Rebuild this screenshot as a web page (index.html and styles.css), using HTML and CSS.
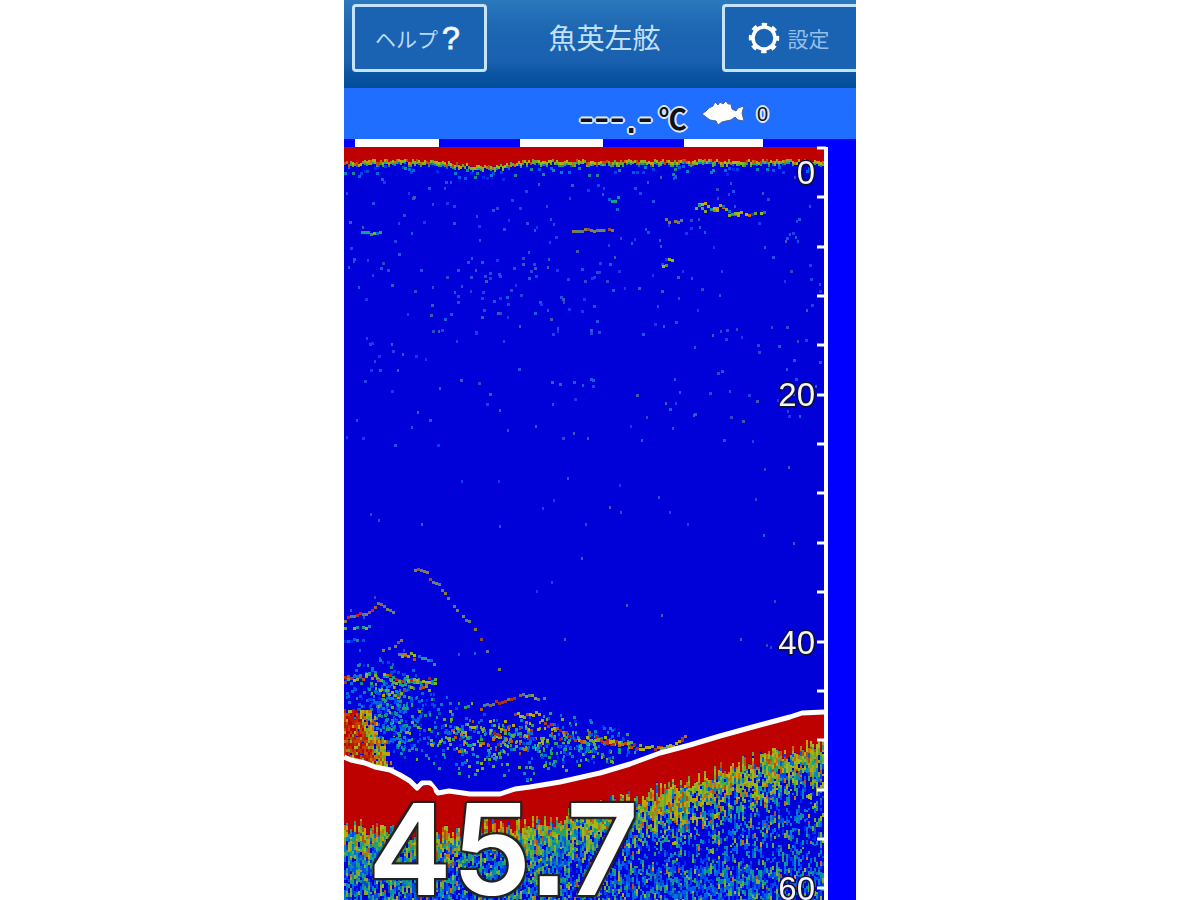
FILE: index.html
```
<!DOCTYPE html>
<html lang="ja">
<head>
<meta charset="utf-8">
<meta name="viewport" content="width=device-width, initial-scale=1">
<title>魚英左舷</title>
<link rel="stylesheet" href="styles.css">
</head>
<body>
<main class="app">
  <header class="topbar">
    <button class="nav-button" type="button">ヘルプ<span class="mark">?</span></button>
    <h1 class="title">魚英左舷</h1>
    <button class="nav-button nav-button-end" type="button">
      <svg class="gear" viewBox="-16 -16 32 32" aria-hidden="true">
        <circle r="11" fill="none" stroke="#fff" stroke-width="3.5"/>
        <circle r="13.2" fill="none" stroke="#fff" stroke-width="4" stroke-dasharray="5.2 5.167" stroke-dashoffset="2.6"/>
      </svg>
      <span class="label">設定</span>
    </button>
  </header>
  <section class="status">
    <span class="temp">---.-</span>
    <span class="unit">℃</span>
    <svg class="fish" viewBox="0 0 44 28" aria-hidden="true">
      <path d="M1 14 L5 11 L8 8 L12 6 L14 2 L17 5 L19 2 L22 4 L25 1 L27 4 L30 4 L31 9 L35 11 L37 8 L43 6 L41 13 L43 21 L37 20 L34 17 L30 20 L25 21 L21 22 L17 25 L15 21 L9 20 L5 17Z" fill="#fff" stroke="#46639c" stroke-width="1"/>
    </svg>
    <span class="count">0</span>
  </section>
  <section class="echo">
    <canvas class="echo-canvas" width="512" height="761"></canvas>
    <svg class="echo-scale" viewBox="0 0 512 761">
      <g fill="#fff"><path d="M11 0h84v8h-84zM176 0h83v8h-83zM340 0h79v8h-79z"/></g>
      <path d="M0 618L7 621L21 624L31 628L46 631L56 636L66 642L73 649L78 644L86 644L94 654L105 652L126 655L156 655L171 650L186 648L216 643L256 634L286 625L316 614L346 606L376 597L416 586L446 578L458 574L480 573" fill="none" stroke="#fff" stroke-width="5" stroke-linejoin="round"/>
      <circle cx="83" cy="653" r="7" fill="#bd0000"/>
      <path id="ticks" fill="none" stroke="#fff" stroke-width="3"/>
      <path d="M482 8V761" stroke="#fff" stroke-width="4"/>
      <g class="depth" text-anchor="end">
        <text x="471" y="45">0</text>
        <text x="471" y="267">20</text>
        <text x="471" y="515">40</text>
        <text x="471" y="761">60</text>
      </g>
    </svg>
    <output class="reading">45<span class="point">.</span>7</output>
  </section>
</main>
<script src="echo.js"></script>
</body>
</html>
```
FILE: styles.css
```
* { box-sizing: border-box; }
body {
  margin: 0;
  background: #fff;
  font-family: "Liberation Sans", "Noto Sans CJK JP", sans-serif;
}
.app {
  width: 100%;
  max-width: 512px;
  margin: 0 auto;
  overflow: hidden;
}
.topbar {
  display: grid;
  grid-template-columns: 135px 1fr 134px;
  height: 88px;
  padding: 4px 0 16px 8px;
  background: linear-gradient(#2b78bc 0, #1c66b2 35%, #1a60b0 70%, #0a54a2 85%, #044d99 100%);
}
.nav-button {
  display: flex;
  align-items: center;
  justify-content: center;
  gap: 4px;
  padding: 0 4px 0 0;
  border: 3px solid #c5e4fc;
  border-radius: 4px;
  background: #1a62b2;
  color: #b9daf8;
  font-family: inherit;
  font-size: 21px;
}
.mark {
  color: #fff;
  font-size: 32px;
  font-weight: 400;
  -webkit-text-stroke: 1px #e8f4ff;
}
.nav-button-end {
  gap: 8px;
  border-right: 0;
  border-radius: 4px 0 0 4px;
}
.gear { width: 32px; height: 32px; }
.label { color: #94bfe8; }
.title {
  align-self: center;
  margin: 0;
  padding-top: 4px;
  text-align: center;
  color: #c3e0fa;
  font-size: 28px;
  font-weight: 400;
  line-height: 40px;
}
.status {
  display: flex;
  align-items: center;
  justify-content: flex-end;
  height: 51px;
  padding-right: 88px;
  background: #206eff;
  color: #111;
  line-height: 32px;
}
.temp, .unit, .count {
  text-shadow: 1px 1px 0 #dce8ff, -1px 1px 0 #dce8ff, 1px -1px 0 #dce8ff, -1px -1px 0 #dce8ff, 2px 0 0 #dce8ff, -2px 0 0 #dce8ff, 0 2px 0 #dce8ff, 0 -2px 0 #dce8ff;
}
.temp {
  padding-top: 6px;
  font-size: 46px;
}
.unit {
  margin-left: 6px;
  padding-top: 8px;
  font-family: "Noto Sans CJK JP", sans-serif;
  font-size: 28px;
  font-weight: 700;
}
.fish { width: 44px; height: 28px; margin-left: 14px; }
.count { margin-left: 12px; font-size: 20px; }
.echo {
  position: relative;
  aspect-ratio: 512 / 761;
  overflow: hidden;
  background: #00f;
}
.echo-canvas, .echo-scale {
  position: absolute;
  inset: 0;
  width: 100%;
  height: 100%;
}
.depth {
  fill: #f4f4ff;
  stroke: #101030;
  stroke-width: 3px;
  stroke-linejoin: round;
  paint-order: stroke;
  font-size: 33px;
}
.reading {
  position: absolute;
  left: 24px;
  bottom: 0;
  color: #fff;
  font-family: Inter, "Liberation Sans", sans-serif;
  font-size: 126px;
  font-weight: 600;
  line-height: 96px;
  text-shadow: 2px 2px 1px #222, -2px -2px 1px #222, 2px -2px 1px #222, -2px 2px 1px #222;
}
.point {
  font-family: "Liberation Sans", sans-serif;
  font-weight: 700;
}
```
FILE: echo.js
```
const ctx = document.querySelector('.echo-canvas').getContext('2d');
let seed = 90210;
const rnd = () => {
  seed = (seed + 0x6D2B79F5) | 0;
  let t = Math.imul(seed ^ (seed >>> 15), 1 | seed);
  t = (t + Math.imul(t ^ (t >>> 7), 61 | t)) ^ t;
  return ((t ^ (t >>> 14)) >>> 0) / 4294967296;
};
const pick = list => list[Math.floor(rnd() * list.length)];
const RED = '#bd0000', WATER = '#0000d8', WIDTH = 480;
const HOT = ['#c8a000', '#c87010', '#9cb810', '#88b020', '#68a830', '#b85010', '#a8b818'];
const MID = ['#28a060', '#60b030', '#0090b8', '#10a090', '#88a830', '#0068e0', '#20a080'];
const COLD = ['#0058f0', '#0040f0', '#0080c8', '#0068e0', '#188898', '#0028f0', '#0050d0'];
const FAINT = ['#1838f0', '#2050e8', '#1060e0', '#3048c8', '#2040e8', '#4058b0'];

const bed = [[0, 618], [21, 624], [46, 631], [73, 648], [94, 654], [126, 655], [156, 655], [186, 648], [256, 634], [316, 614], [376, 597], [446, 578], [480, 573]];
const under = [[0, 686], [56, 692], [90, 696], [130, 688], [176, 686], [216, 678], [256, 668], [296, 657], [336, 645], [376, 632], [416, 619], [456, 608], [480, 604]];
const at = (line, x) => {
  for (let i = 1; i < line.length; i++) {
    const [x0, y0] = line[i - 1], [x1, y1] = line[i];
    if (x <= x1) return y0 + (y1 - y0) * (x - x0) / (x1 - x0);
  }
  return line[line.length - 1][1];
};
const dot = (x, y, colour, w = 2, h = 3) => {
  ctx.fillStyle = colour;
  ctx.fillRect(Math.round(x), Math.round(y), w, h);
};

ctx.fillStyle = WATER;
ctx.fillRect(0, 8, WIDTH, 753);

/* Surface clutter */
for (let x = 0; x < WIDTH; x += 2) {
  const edge = 20 + (x > 90 && x < 185 ? 5 * Math.sin((x - 90) / 95 * Math.PI) : 0) + (x < 20 ? 2 : 0);
  const h = edge + Math.floor(rnd() * 4);
  dot(x, 8, RED, 2, h - 8);
  dot(x, h, pick(HOT), 2, 3);
  if (rnd() < .75) dot(x, h + 3, pick(MID), 2, 2);
  if (rnd() < .25) dot(x, h + 5 + rnd() * 7, pick(COLD), 3, 3);
}

/* Ambient speckle, thinning with depth */
for (let i = 0; i < 270; i++) {
  const y = 36 + Math.pow(rnd(), 1.3) * 270;
  dot(rnd() * 477, y, pick(FAINT), 2 + Math.floor(rnd() * 2), 3);
}
for (let i = 0; i < 45; i++) dot(rnd() * 470, 270 + rnd() * 250, pick(FAINT));
for (let i = 0; i < 50; i++) dot(85 + rnd() * 180, 120 + rnd() * 75, pick(FAINT), 3, 3);

/* Echo traces follow a polyline with a spread and a density */
const trace = (points, spread, density, colours) => {
  for (let x = points[0][0]; x < points[points.length - 1][0]; x += 3) {
    const n = Math.floor(density) + (rnd() < density % 1 ? 1 : 0);
    for (let k = 0; k < n; k++) dot(x, at(points, x) + (rnd() - .5) * spread, pick(colours), 3, 3);
  }
};
const DULL = ['#808050', '#907840', '#608078', '#905040', '#6070a0'];
const WARM = HOT.concat(['#c02810', '#b81808', '#b03820']);
trace([[228, 90], [272, 90]], 2, .8, DULL);
trace([[351, 67], [398, 71]], 10, 1.5, MID.concat(HOT));
trace([[398, 74], [425, 73]], 4, .7, HOT.concat(COLD));
trace([[318, 80], [338, 81]], 3, .7, DULL);
trace([[264, 57], [276, 60]], 9, 1, MID);
trace([[17, 93], [40, 93]], 2, .6, MID);
trace([[318, 124], [328, 121]], 6, 1, ['#708060', '#a0b030']);
trace([[70, 431], [80, 432], [94, 445], [118, 475], [134, 496], [147, 520], [158, 530]], 5, .55, DULL);
trace([[0, 479], [20, 474], [34, 464], [50, 473]], 4, .9, ['#a06040', '#808060', '#c02030', '#508080']);
trace([[0, 489], [26, 486]], 4, .65, MID);
trace([[0, 500], [22, 500]], 3, .7, COLD);
trace([[35, 510], [48, 505], [65, 496]], 4, .6, DULL);
trace([[54, 516], [70, 516]], 6, 1.8, DULL.concat(HOT));
trace([[74, 517], [90, 523]], 3, .6, MID);

/* Bait layer above the bottom */
const cloud = (cx, cy, rx, ry, count, colours) => {
  for (let i = 0; i < count; i++) {
    const a = rnd() * Math.PI * 2, r = Math.pow(rnd(), .7);
    const x = cx + Math.cos(a) * rx * r, y = cy + Math.sin(a) * ry * r;
    if (x > 0 && y < at(bed, x) - 6) dot(x, y, pick(colours), 2 + Math.floor(rnd() * 2), 3);
  }
};
cloud(36, 568, 60, 48, 260, COLD);
cloud(48, 580, 22, 40, 130, COLD.concat(MID));
cloud(50, 555, 42, 20, 40, MID);
cloud(100, 593, 52, 38, 110, COLD.concat(MID));
cloud(190, 600, 100, 28, 170, COLD.concat(MID));
cloud(165, 599, 85, 15, 120, MID.concat(HOT));
cloud(175, 594, 75, 18, 45, WARM);
cloud(235, 609, 60, 16, 110, COLD.concat(MID));
cloud(170, 626, 80, 14, 40, MID);
trace([[0, 540], [30, 535], [50, 540], [75, 544], [92, 538]], 9, 2, WARM.concat(MID));
trace([[35, 553], [62, 553]], 7, 1.2, WARM.concat(MID));
trace([[136, 567], [144, 564], [178, 555], [202, 559]], 4, .9, ['#a06020', '#a09040', '#b03020', '#508080']);
trace([[170, 574], [190, 574], [210, 590], [240, 600], [270, 601]], 7, .9, WARM);
trace([[250, 600], [282, 604], [300, 608], [328, 606], [342, 597]], 4, 1.3, WARM);
for (let y = 571; y < 634; y += 3) {
  const reach = 24 + (y - 571) * .32;
  for (let x = 0; x < reach + rnd() * 12; x += 2) {
    if (y > at(bed, x)) continue;
    if (x < reach - 10 && rnd() < .72) dot(x, y, pick(['#c01800', '#b83000', '#c84000', RED]), 2, 5);
    else if (rnd() < .85) dot(x, y, pick(HOT), 2, 4);
  }
}

/* Seabed: solid return, then a tail that breaks up with depth */
for (let x = 0; x < WIDTH; x += 2) {
  const top = at(bed, x), base = at(under, x) + (rnd() - .5) * 18;
  const streak = (rnd() - .5) * 26;
  dot(x, top, RED, 2, base - top);
  const right = Math.max(0, Math.min(1, (x - 210) / 90));
  for (let y = base; y < 761;) {
    const d = y - at(under, x) + streak;
    const h = 2 + Math.floor(rnd() * 4);
    const hot = Math.max(.07, .78 - d / (42 + 24 * right));
    const mid = Math.max(.28, .85 - d / 110);
    const empty = (.26 + right * (y < 727 ? .4 : .1)) * Math.min(1, Math.max(.15, d / 50));
    let colour = WATER;
    if (rnd() < hot * (d > 55 ? 1 - empty : 1)) colour = pick(HOT);
    else if (rnd() > empty) colour = rnd() < mid ? pick(MID) : pick(COLD);
    dot(x, y, colour, 2, h + 1);
    y += h;
  }
}

let ticks = '';
for (let i = 0; i < 16; i++) ticks += `M473 ${Math.round(9 + i * 49.35)}h9`;
document.getElementById('ticks').setAttribute('d', ticks);
```
